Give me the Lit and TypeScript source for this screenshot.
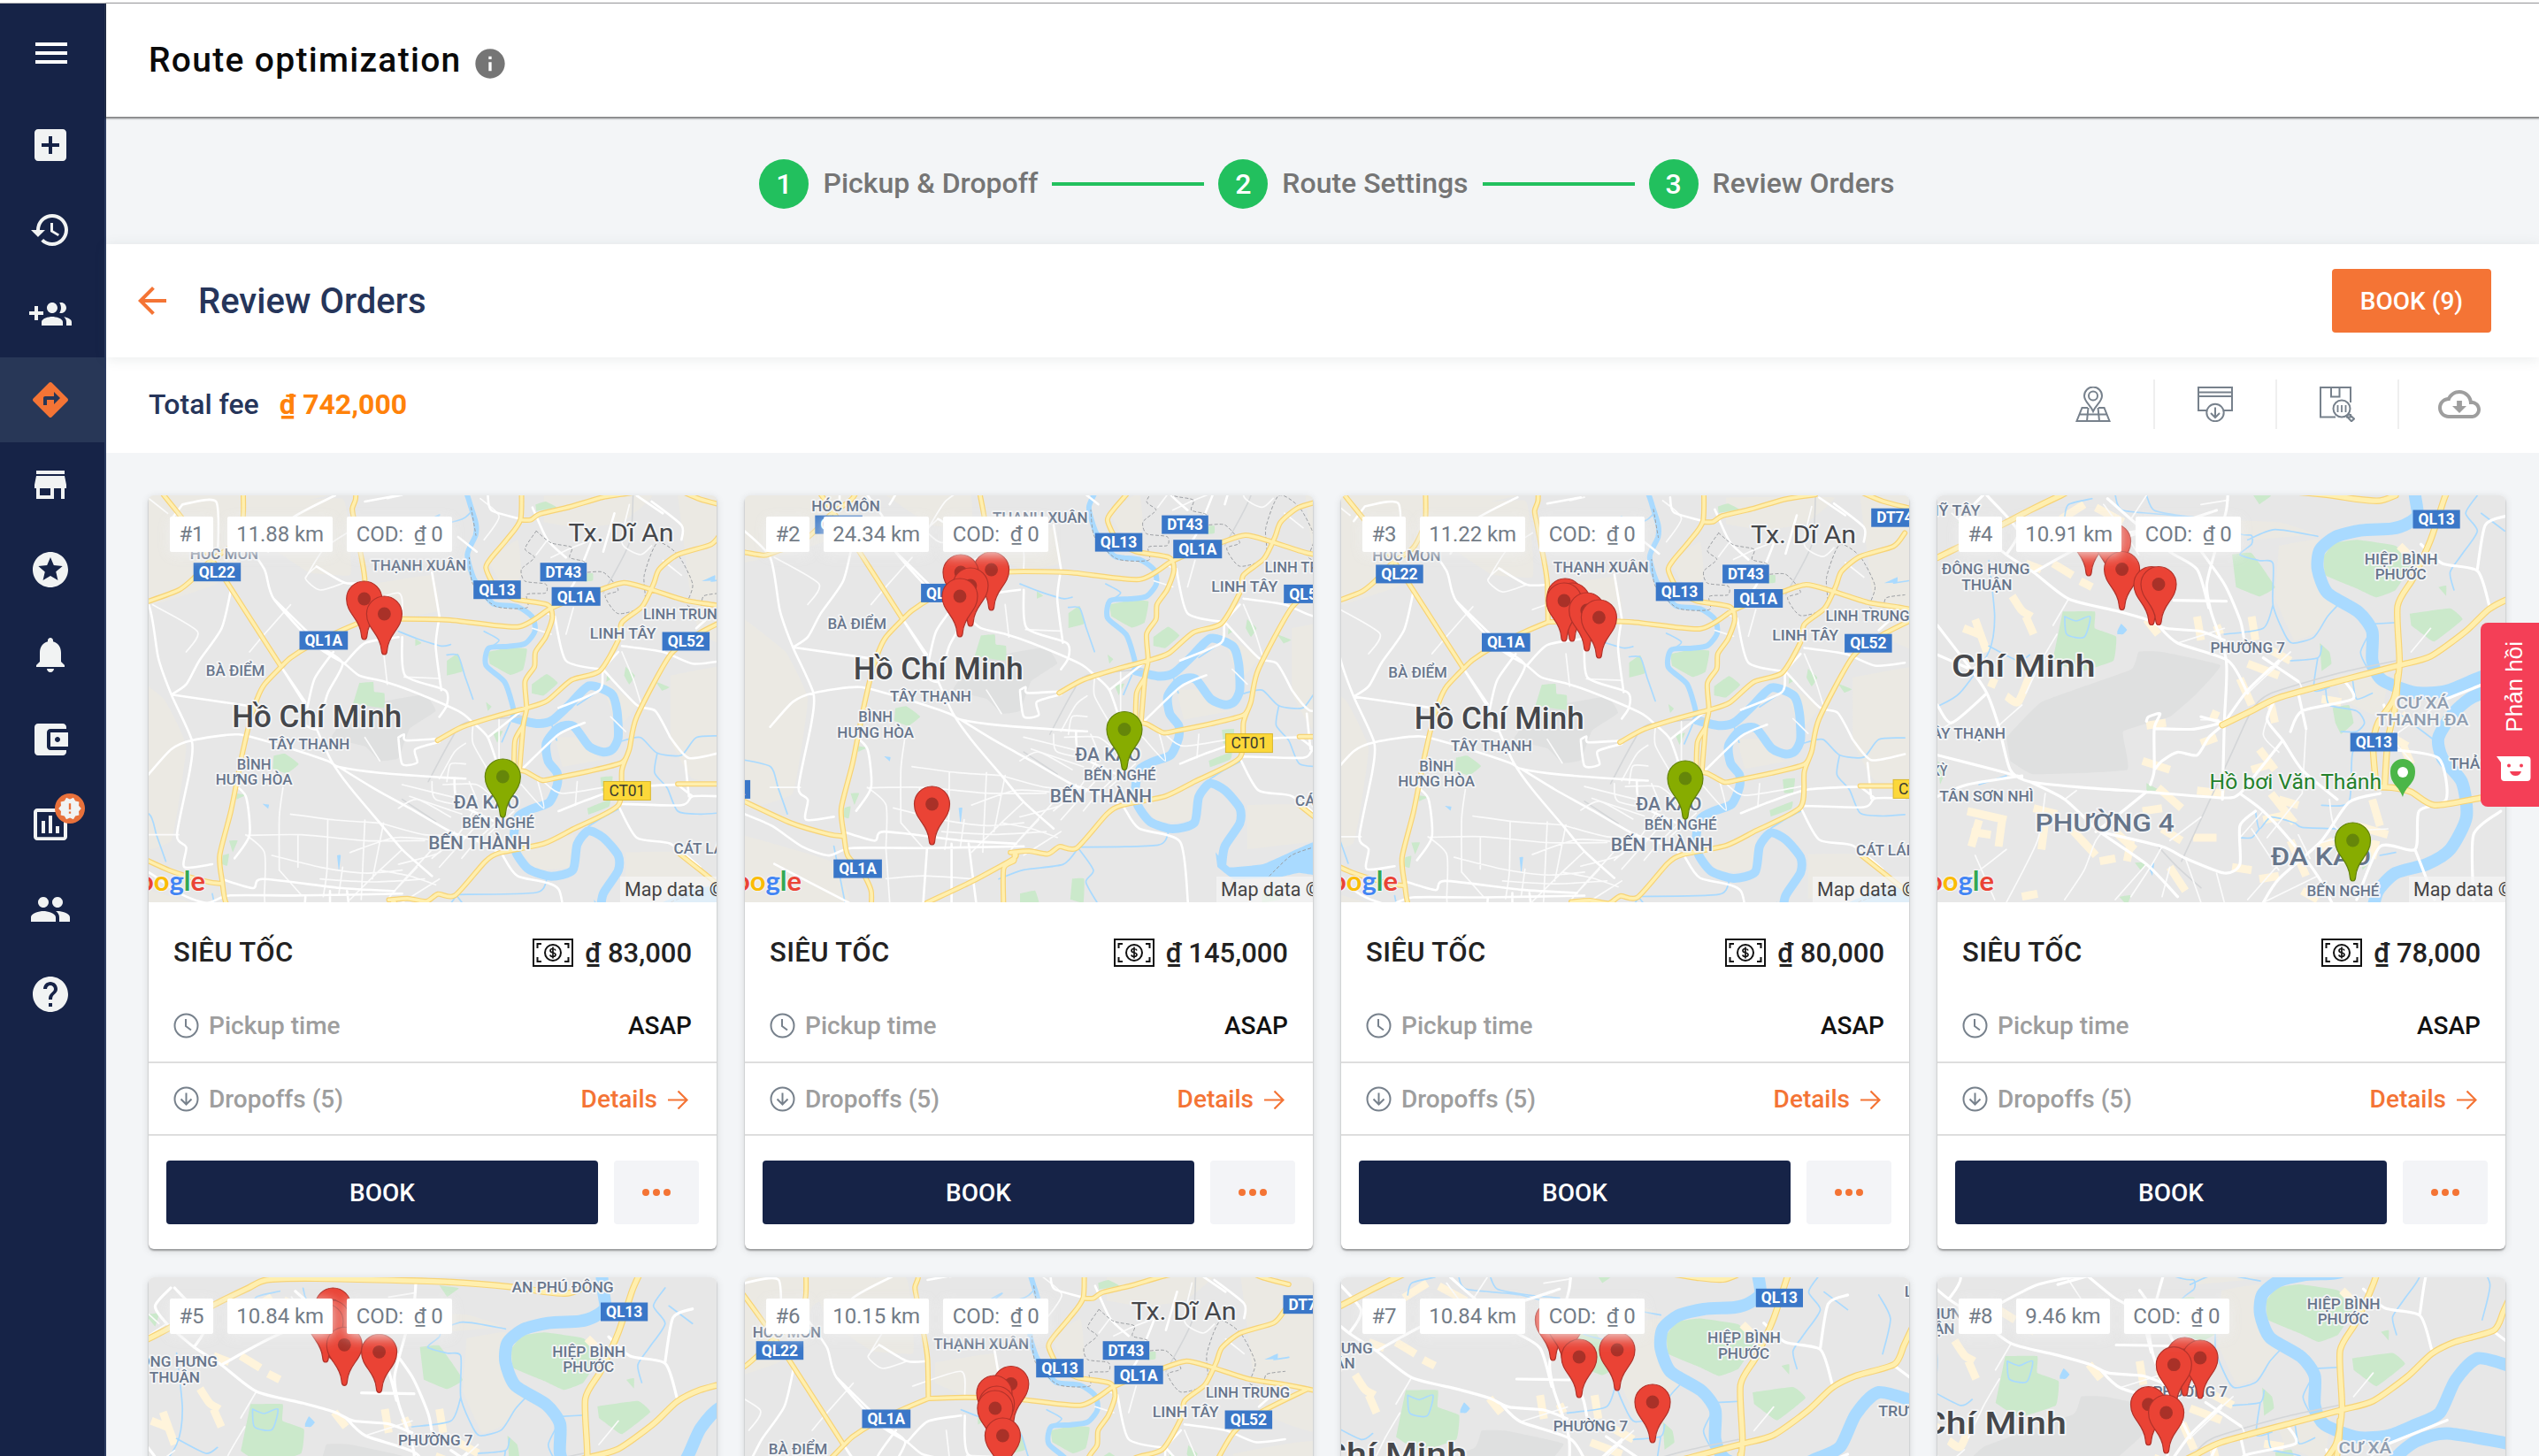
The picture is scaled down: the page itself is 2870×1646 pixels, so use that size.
import { LitElement, html, svg, css } from "lit";
import { customElement, property } from "lit/decorators.js";

/* ---------- map geometry ---------- */

type Frame = { x: number; y: number; kx: number; ky: number };
const CITY: Frame = { x: 19, y: 29, kx: 0.4209, ky: 1 / 3 };
const DISTRICT: Frame = { x: 23, y: 29, kx: 0.44005, ky: 1 / 3 };

const project = (f: Frame, s: string): [number, number][] =>
  s.trim().split(/\s+/).map((p) => {
    const [x, y] = p.split(",").map(Number);
    return [(x - f.x) * f.kx, (y - f.y) * f.ky] as [number, number];
  });

const n = (v: number) => v.toFixed(1);

/* Catmull-Rom spline through the points; t = 0 gives straight segments. */
function line(f: Frame, s: string, t = 0.12): string {
  const p = project(f, s);
  let d = `M${n(p[0][0])} ${n(p[0][1])}`;
  for (let i = 0; i < p.length - 1; i++) {
    const a = p[Math.max(0, i - 1)], b = p[i], c = p[i + 1], e = p[Math.min(p.length - 1, i + 2)];
    d += `C${n(b[0] + (c[0] - a[0]) * t)} ${n(b[1] + (c[1] - a[1]) * t)} ${n(c[0] - (e[0] - b[0]) * t)} ${n(c[1] - (e[1] - b[1]) * t)} ${n(c[0])} ${n(c[1])}`;
  }
  return d;
}
const lines = (f: Frame, list: string[], t?: number) => list.map((s) => line(f, s, t)).join("");
const areas = (f: Frame, list: string[], t = 0.05) => list.map((s) => line(f, s, t) + "Z").join("");

type Label = { t: string; x: number; y: number; w: number; k?: string };
type Base = {
  frame: Frame;
  land: string; gray: string; park: string; cream: string;
  river: string; wide: string; lake: string; stream: string;
  minor: string; road: string; rail: string; dash: string; yellow: string;
  labels: Label[];
};

const cityBase: Base = {
  frame: CITY,
  land: areas(CITY, [
    "-60,20 520,20 390,60 290,140 270,230 200,330 60,390 -60,420",
    "290,60 540,40 560,200 560,300 450,290 330,190",
    "620,330 780,300 800,420 700,440 620,400",
    "1080,30 1370,30 1290,120 1180,140 1080,120",
    "930,250 1010,180 1020,300 980,360",
    "1440,30 1650,30 1650,560 1500,500 1470,330",
    "1420,640 1650,600 1650,1000 1480,990 1420,860",
    "-60,600 60,720 120,880 80,1200 -60,1260", "-60,1340 180,1430 230,1571 -60,1571",
    "1010,1230 1160,1180 1150,1290 1060,1300", "1230,650 1330,740 1280,820",
    "1300,1240 1440,1240 1540,1350 1300,1390", "1110,850 1180,850 1230,920 1260,920 1130,950"
  ]),
  gray: areas(CITY, ["640,730 760,705 790,760 720,820 690,920 640,930 600,880 510,850 560,760"]),
  park: areas(CITY, [
    "930,560 990,545 1035,550 1025,620 990,638 935,600", "585,665 622,662 625,695 652,700 650,750 568,735",
    "820,590 850,565 862,625 820,640", "1048,670 1088,635 1118,665 1080,708 1048,700",
    "355,912 385,905 422,940 390,972 352,955", "1058,60 1085,50 1115,70 1060,82",
    "1185,295 1212,293 1212,318 1190,322", "1232,985 1265,982 1260,1030 1236,1032",
    "1197,1090 1258,1060 1255,1085 1200,1112", "1300,610 1325,640 1310,670 1296,640",
    "1380,660 1418,680 1398,692", "944,835 970,828 955,868", "925,730 940,745 930,760",
    "235,1200 258,1200 245,1240", "218,1250 235,1245 230,1285 216,1280", "255,1040 280,1045 255,1060",
    "735,515 752,530 735,540", "1250,640 1262,650 1248,662", "830,1490 862,1490 860,1571 825,1560",
    "690,1540 730,1530 740,1571 690,1571", "1340,1540 1380,1530 1390,1560 1340,1571"
  ]),
  cream: "",
  river: lines(CITY, [
    "860,-20 875,30 885,70 898,125 897,165 875,230 892,310 920,362 947,398 1010,407 1050,442 1056,490 1030,532 985,541 932,547 925,605 975,662 996,740 1003,790"
  ]),
  wide: lines(CITY, [
    "1000,785 1060,803 1102,793 1150,738 1202,675 1262,702 1277,760 1280,850 1265,890 1240,900 1202,880 1160,812 1120,817 1087,870 1092,930 1116,970 1116,1012 1095,1070 1050,1092 1012,1118 1000,1180 1006,1240 1040,1297 1100,1321 1158,1300 1170,1212 1200,1167 1240,1190 1280,1250 1280,1302 1240,1380 1232,1440"
  ]),
  lake: areas(CITY, [
    "1215,1400 1253,1451 1344,1440 1415,1400 1480,1365 1600,1340 1650,1340 1650,1500 1540,1490 1440,1470 1385,1485 1263,1490 1220,1450",
    "1505,320 1540,300 1540,318", "325,1075 342,1078 340,1092", "525,1250 535,1250 530,1308", "1330,1470 1355,1490 1335,1480"
  ]),
  stream: lines(CITY, [
    "690,490 740,515 805,540 830,535", "820,570 850,572 868,640 890,720", "1290,862 1340,850 1385,903 1450,910 1490,850 1560,845",
    "1385,903 1378,970 1412,1022 1440,1100 1500,1110 1560,1105", "1285,1090 1240,1120 1200,1152", "846,1383 1060,1376 1090,1326 1110,1320",
    "633,1491 700,1460 806,1441 846,1386", "846,1386 887,1461 867,1501 897,1571", "720,150 800,95 760,140 860,110 885,85", "1100,800 1115,860",
    "1170,740 1230,690", "930,550 960,520 920,490", "-60,1085 20,1110 40,1180 65,1270", "1530,320 1570,312", "968,865 990,800", "1040,1090 1000,1130", "190,1380 220,1571"
  ]),
  minor: lines(CITY, [
    "560,150 490,210 440,310", "470,270 440,310 480,350 545,325", "400,400 330,500 290,560", "650,560 660,670", "705,645 800,650",
    "280,1182 430,1180 600,1200 760,1200", "380,1020 370,1120 370,1300", "400,1110 520,1130 640,1140", "350,1250 480,1290 600,1310 700,1300",
    "500,1130 498,1300 488,1390", "600,1130 590,1400", "650,1140 620,1330", "700,1230 640,1300 560,1400", "780,1230 700,1340 660,1400",
    "640,1140 760,1180 860,1180", "560,1240 680,1190 800,1200", "840,1170 800,1240 690,1280", "860,1060 700,1010", "860,1110 720,1050",
    "900,1080 850,1180 780,1260", "780,1000 790,1060 900,1090", "810,1010 900,1010 950,1060", "870,870 840,900 800,990", "890,810 890,870 930,960",
    "960,790 960,930", "1090,430 1110,440", "820,1000 830,940 870,940", "950,1140 900,1200 860,1260", "920,1120 870,1190 800,1290", "1000,1100 930,1180",
    "280,1180 330,1240 330,1380", "19,1180 100,1180", "370,1300 430,1386", "420,1180 420,1290", "540,1290 530,1380", "480,1330 620,1340 760,1330",
    "740,1290 680,1370", "800,1330 700,1410", "640,1300 720,1320 790,1350", "330,1490 430,1480 560,1490", "330,1390 340,1571", "1020,1010 1080,1090 1060,980",
    "1080,1000 1130,1040 1280,1010", "1170,1000 1165,1080", "1300,830 1260,780", "1450,300 1400,250", "1090,180 1060,230", "1210,180 1150,210 1100,240",
    "1050,480 1100,500", "1140,500 1160,410", "1400,560 1430,520", "1340,730 1320,650 1290,560", "120,560 150,490 30,400", "660,40 700,29", "560,410 690,360 700,440",
    "20,40 70,90", "1310,60 1290,190 1340,230 1370,200", "910,40 960,100 920,180", "640,930 600,850", "690,1090 740,1060 830,1120", "880,1000 900,1060"
  ]),
  road: lines(CITY, [
    "-60,300 19,400 45,580 80,705 135,860 130,960 95,1180 120,1222 115,1290 190,1280", "80,705 120,670 155,590 215,480 240,350",
    "80,705 300,745", "110,60 200,50 205,220", "110,60 80,110", "275,180 330,280 355,380 470,540 545,600 585,640 650,660 720,690 850,760 890,800 930,850 960,960",
    "520,29 400,110 340,220", "470,270 545,325 600,325", "235,330 310,480 440,740", "355,380 460,510", "375,610 440,730", "600,50 690,29",
    "515,560 465,650 445,750", "490,550 540,600 500,700 470,820 430,800", "545,600 600,530 690,510", "19,975 80,890 135,860 260,840 380,880 500,930 530,950 640,970 800,985 870,990",
    "470,820 510,930 560,1020 640,1140 700,1230 780,1320", "530,950 620,1020 720,1090 830,1170 900,1200 960,1240", "840,990 850,1070 940,1130 1000,1160",
    "690,855 700,940 740,935 735,890 800,865", "690,850 705,840 710,860 790,855", "700,510 708,640 815,690 820,740 800,780", "800,440 790,540 805,690", "780,290 800,440",
    "1020,110 940,80 930,29", "850,170 900,220", "1110,440 1140,590 1240,620", "1240,620 1330,740 1380,760 1420,850", "1290,540 1400,560 1480,600 1560,590",
    "1120,750 1230,690 1240,620 1280,560", "1140,240 1090,180 1050,70", "1210,180 1160,330 1110,400", "1280,1080 1330,1190 1420,1210 1500,1290",
    "1120,1100 1200,1060 1300,1020 1440,1010", "1280,1075 1450,1080 1480,1050 1560,1050", "1440,1010 1480,1050", "970,1250 1010,1320 1120,1365 1141,1571",
    "-49,1271 24,1311 105,1381 176,1411 238,1386 430,1386 700,1380", "217,1331 300,1361 325,1330 530,1360 680,1371", "440,1391 430,1571", "506,1371 506,1571", "552,1371 572,1571",
    "240,1000 280,1050 290,1180 250,1260", "30,1440 230,1571", "1420,850 1470,920 1560,900", "1460,930 1470,1050", "930,850 1030,750", "1020,960 1120,840 1190,800", "1370,50 1450,130 1450,180", "1270,90 1240,220", "1330,30 1400,90", "1560,400 1490,480"
  ]),
  rail: lines(CITY, ["1320,30 1310,190 1240,360", "1020,780 870,800 830,860 770,1000", "700,1060 790,1135"]),
  dash: lines(CITY, [
    "1060,150 1030,210 1055,240 1020,280 1030,320 1085,330 1085,360 1035,365 1035,410 950,405 890,330 880,240", "1060,150 1100,190 1155,205 1150,240 1190,255 1180,290 1240,290 1280,350 1245,370 1280,430 1350,400 1350,300 1385,190 1440,230 1480,330 1465,400 1500,410 1510,370 1560,360",
    "885,70 898,165", "1360,1480 1420,1410 1500,1375"
  ]),
  yellow: lines(CITY, [
    "40,-10 60,29 108,105 185,240 230,325 375,610", "272,-20 272,110 240,200 185,250 140,310 100,350 19,388 0,393 -49,383 -80,378",
    "575,-20 575,40 566,75 572,120 592,250 600,320 602,452", "602,452 540,485 450,540 400,580 375,610 330,670 310,720 290,800 275,880 262,960 240,1100 210,1250 217,1341 227,1411 268,1471 290,1531 290,1590",
    "602,452 700,448 830,452 1010,475 1095,415 1150,385 1230,350 1295,325 1360,345 1460,385 1545,402 1660,430",
    "1020,-20 1018,110 980,180 940,240 925,275 950,340 1000,380 1090,400 1103,445 1085,510 1058,560 1055,610 1030,660 1034,750 1025,810 1015,960",
    "1025,810 1003,860 1000,960", "1000,960 1030,965 1075,995 1110,988 1200,965 1290,935 1310,890", "1018,112 1045,112 1070,92 1150,68 1240,35 1320,20",
    "795,860 860,815 960,775 1035,750 1090,725 1155,655 1230,625 1280,520 1290,460 1345,405 1375,330 1390,280 1440,230 1530,195 1560,150", "1440,10 1500,42 1570,65",
    "1620,420 1500,495 1420,570 1330,780 1310,890 1290,960 1280,1080 1160,1160 1080,1210 963,1241 923,1271 842,1386 796,1381 765,1406 715,1396 664,1401",
    "674,1401 674,1420 560,1500 440,1571", "674,1410 674,1430 646,1456 646,1590", "-60,1222 75,1301 176,1339 217,1346", "1440,1008 1660,1008", "1440,1240 1500,1300 1600,1400"
  ]),
  labels: [
    { t: "HÓC MÔN", x: 222, y: 228, w: 184, k: "area" },
    { t: "THẠNH XUÂN", x: 744, y: 266, w: 256, k: "area" },
    { t: "BÀ ĐIỂM", x: 252, y: 625, w: 158, k: "area" },
    { t: "LINH TRUNG", x: 1460, y: 433, w: 226, k: "area" },
    { t: "LINH TÂY", x: 1293, y: 499, w: 178, k: "area" },
    { t: "TÂY THẠNH", x: 450, y: 873, w: 218, k: "area" },
    { t: "BÌNH", x: 302, y: 942, w: 92, k: "area" },
    { t: "HƯNG HÒA", x: 302, y: 994, w: 206, k: "area" },
    { t: "ĐA KAO", x: 926, y: 1071, w: 176, k: "area2" },
    { t: "BẾN NGHÉ", x: 958, y: 1140, w: 194, k: "area" },
    { t: "BẾN THÀNH", x: 907, y: 1210, w: 274, k: "area2" },
    { t: "CÁT LÁI", x: 1502, y: 1226, w: 146, k: "area" },
    { t: "Hồ Chí Minh", x: 471, y: 780, w: 456, k: "city" },
    { t: "Tx. Dĩ An", x: 1288, y: 155, w: 283, k: "town" },
    { t: "QL22", x: 203, y: 289, w: 127, k: "shield" },
    { t: "DT43", x: 1133, y: 289, w: 125, k: "shield" },
    { t: "QL13", x: 955, y: 349, w: 127, k: "shield" },
    { t: "QL1A", x: 1167, y: 372, w: 131, k: "shield" },
    { t: "QL1A", x: 489, y: 521, w: 130, k: "shield" },
    { t: "QL52", x: 1462, y: 524, w: 127, k: "shield" }
  ]
};

const districtBase: Base = {
  frame: DISTRICT,
  land: areas(DISTRICT, ["900,200 1000,180 1010,290 1050,400 1000,490 940,520 890,380", "700,110 900,120 990,160 830,180", "1040,640 1180,620 1160,780 1060,720"]),
  gray: areas(DISTRICT, ["200,850 290,730 520,620 540,560 600,560 750,605 690,700 620,780 500,830 510,960 270,975 210,930"]),
  park: areas(DISTRICT, [
    "1040,190 1100,180 1200,200 1240,262 1200,350 1150,375 1100,345 1020,300 1015,235", "345,423 427,423 427,480 482,508 475,590 380,630 320,582",
    "1236,430 1340,412 1372,450 1300,525 1270,500 1240,470", "780,230 830,225 890,340 850,372 790,340", "1038,750 1080,740 1092,800 1060,838 1045,800",
    "1005,530 1030,560 1035,600 1010,625", "530,1275 560,1275 545,1300", "23,930 45,960 30,1010", "490,1390 520,1385 510,1420", "560,1005 595,1030 560,1030",
    "1110,1250 1135,1270 1115,1300", "1310,340 1330,335 1330,370", "830,20 880,30 850,60", "75,120 110,115 100,160"
  ]),
  cream: lines(DISTRICT, [
    "215,370 240,420 265,440", "250,440 270,500", "90,480 130,500", "260,640 230,730 200,710", "160,680 170,650", "320,260 370,300", "390,320 420,340",
    "560,450 590,500", "690,440 700,520", "740,470 750,500", "830,440 840,520", "860,540 930,590", "820,600 900,640", "800,650 830,740", "740,760 730,790", "550,930 620,960",
    "590,1020 650,1090", "550,1100 600,1090", "690,1030 760,1040", "850,890 890,960", "830,960 880,940", "880,1040 940,1140", "900,1060 950,1080", "860,1130 930,1110",
    "100,1100 200,1130", "110,1170 160,1180", "130,1130 110,1220", "190,1120 180,1220", "270,1090 330,1110", "300,1130 290,1230", "360,1150 430,1250", "440,1270 480,1260", "480,1170 530,1230",
    "520,1200 510,1270", "600,1160 650,1200", "680,1190 740,1190", "620,1290 660,1370", "780,1290 830,1300", "850,1330 900,1320", "930,1200 970,1320", "1000,1230 1040,1200", "1100,1150 1180,1180",
    "1150,1200 1140,1260", "960,1370 1000,1400", "240,1390 280,1380", "1180,840 1230,880", "1210,800 1230,770", "1010,720 1060,730", "560,810 610,800", "880,740 890,800",
    "400,60 340,110", "430,70 500,120", "250,260 290,280", "1140,1060 1160,1150", "1220,880 1240,940", "120,450 150,560", "700,870 740,850", "1210,200 1240,240"
  ]),
  river: "",
  wide: lines(DISTRICT, [
    "1245,-60 1250,29 1256,95 1230,125 1190,142 1110,148 1045,170 1005,215 1000,280 1025,360 1105,425 1140,490 1140,590 1165,655 1250,698 1330,692 1400,655 1461,615 1501,505 1560,430 1660,465",
    "1640,720 1480,685 1400,712 1350,765 1310,850 1320,920 1370,1000 1382,1120 1340,1230 1280,1280 1200,1310 1155,1370 1140,1440"
  ]),
  lake: areas(DISTRICT, ["485,490 495,465 510,485 500,500 485,500", "565,1290 580,1275 575,1320"]),
  stream: lines(DISTRICT, [
    "350,100 360,60 420,40", "560,29 580,80 660,100 740,110", "480,30 500,80 640,100 800,160 830,165 830,195 800,230 850,250 885,260 885,400 915,500 935,530 990,510 1025,440 1060,390",
    "820,180 890,145 1000,168", "155,250 170,440 155,560 80,700 23,745", "155,540 230,590 260,570", "350,440 355,500 400,510 415,440 380,455 350,440", "930,590 1000,580 1010,540",
    "1140,480 1110,560 1130,620", "1020,680 1030,740 1100,760 1120,800 1100,830 1060,830", "1010,1080 1080,1070 1090,900 1140,850", "1180,740 1240,800 1300,860", "840,1100 850,1160 880,1120 940,1140 960,1155 1060,1160",
    "850,1160 830,1190 800,1190", "1160,1250 1200,1240", "1410,29 1380,90 1410,150 1370,230 1340,290 1350,350", "1140,465 1210,460", "1480,150 1420,90", "760,500 860,480 885,400",
    "1090,660 1100,720 1140,700", "1000,580 990,690 1030,680", "130,1010 200,980", "1560,100 1590,180 1570,300"
  ]),
  minor: lines(DISTRICT, [
    "60,90 110,150", "130,150 60,210", "450,60 500,150 540,230", "520,110 560,29", "700,60 770,45", "320,470 360,380", "250,700 290,590 330,500", "150,580 110,620", "240,740 180,810",
    "640,530 760,480", "860,580 950,660 960,700", "900,600 820,700", "930,560 880,620", "900,900 860,840 890,720", "970,820 960,1040", "700,790 745,790", "60,800 23,830", "120,860 180,810",
    "480,1120 430,1200 400,1300 350,1400", "350,1060 380,1030", "620,1290 600,1390", "560,1280 480,1400", "600,1220 570,1290 520,1390", "860,1100 800,1190", "1000,1320 860,1410", "900,1280 820,1400",
    "950,1180 980,1260", "1030,1060 1050,1160 1180,1160", "1200,840 1330,720", "1200,870 1240,930", "300,1040 280,1200 200,1410", "120,1250 170,1400", "23,1370 120,1310 200,1230", "1290,480 1240,560", "660,1260 700,1410",
    "830,1160 900,1300", "740,1310 760,1410", "1080,1180 1000,1210", "700,1120 620,1200", "960,1040 870,1190"
  ]),
  road: lines(DISTRICT, [
    "140,29 100,90 130,150 200,230 270,290 360,380 480,420 560,450 610,480 700,490 760,520", "150,29 230,150 200,230", "460,40 520,110 620,220 690,280 720,410", "590,470 640,530 770,590 820,700",
    "630,385 765,388", "770,0 765,80 740,200 715,330 725,420 765,590 760,800 755,1060", "690,200 760,330 800,450 810,510", "270,290 430,180 620,130 740,80", "480,180 640,120",
    "23,470 110,620 150,700 180,810 210,960 260,1000 400,1020 560,1035 760,1055 800,1040 850,960 910,860", "580,820 680,822 755,800", "700,780 755,800", "560,795 565,780 595,770 580,820 580,960 570,1010",
    "580,960 600,930 640,900 690,910 720,850 755,810", "23,910 170,960 240,985", "23,1050 100,1010 240,980", "23,740 60,800 150,700", "260,1000 350,1060 440,1170 560,1280 640,1390",
    "560,1035 480,1120 430,1170", "440,1170 600,1220 660,1260 760,1310 800,1280 800,1150 840,1100", "800,1040 860,1100 930,1200 1000,1320 1040,1420", "890,720 870,790 910,860 960,960 1050,1060", "1070,660 1090,720 960,760 930,830",
    "950,700 970,820", "755,810 820,690 900,590", "860,580 950,660", "1160,1040 1080,1070 1010,1200 900,1330 860,1410", "1180,890 1310,920 1330,1060 1260,1100 1250,1230 1160,1220 1100,1400",
    "1265,195 1320,260 1410,285 1440,400", "1480,100 1430,130 1410,280", "1250,1230 1300,1400", "1170,740 1200,870", "1330,720 1480,640", "1600,340 1650,390", "23,570 110,620", "1470,1100 1400,1180 1400,1400"
  ]),
  rail: lines(DISTRICT, ["1200,590 1060,630 880,700 830,760 780,900 650,1270", "590,1220 640,1290 700,1360"]),
  dash: "",
  yellow: lines(DISTRICT, [
    "-20,265 23,240 100,190 260,80 340,29 386,2 512,-3 842,8 1017,26 1100,42 1160,47 1200,29", "1345,-20 1325,40 1290,180 1245,310 1205,405 1210,600 1195,720 1155,800 1142,880 1150,1015",
    "1205,640 1200,740 1180,860 1172,1015", "1150,1018 1190,1020 1240,1035 1300,1080 1420,1055 1520,1035", "755,808 830,760 900,715 1080,650 1210,605 1290,575 1380,490 1440,415 1500,375 1600,335 1625,270 1650,200"
  ]),
  labels: [
    { t: "ĐÔNG HƯNG", x: 147, y: 280, w: 226, k: "area" },
    { t: "THUẬN", x: 150, y: 332, w: 130, k: "area" },
    { t: "HIỆP BÌNH", x: 1214, y: 246, w: 188, k: "area" },
    { t: "PHƯỚC", x: 1213, y: 298, w: 132, k: "area" },
    { t: "PHƯỜNG 7", x: 820, y: 545, w: 192, k: "area" },
    { t: "CƯ XÁ", x: 1269, y: 735, w: 136, k: "pale" },
    { t: "THANH ĐA", x: 1269, y: 790, w: 236, k: "pale" },
    { t: "TÂY THẠNH", x: 92, y: 838, w: 212, k: "area" },
    { t: "TÂN SƠN NHÌ", x: 149, y: 1051, w: 242, k: "area" },
    { t: "PHƯỜNG 4", x: 453, y: 1143, w: 358, k: "ward" },
    { t: "ĐA KAO", x: 1008, y: 1256, w: 258, k: "ward" },
    { t: "BẾN NGHÉ", x: 1065, y: 1372, w: 186, k: "area" },
    { t: "THẢO ĐIỀN", x: 1440, y: 938, w: 204, k: "area" },
    { t: "Hồ bơi Văn Thánh", x: 943, y: 1002, w: 442, k: "poi" },
    { t: "QL13", x: 1305, y: 110, w: 121, k: "shield" },
    { t: "QL13", x: 1144, y: 866, w: 121, k: "shield" }
  ]
};

/* font size per label kind */
const KIND: Record<string, number> = { area: 16.8, area2: 19.5, city: 34.5, town: 28.5, pale: 18, ward: 27, poi: 24 };

const drawLabel = (f: Frame, l: Label) => {
  const x = (l.x - f.x) * f.kx, y = (l.y - f.y) * f.ky, w = l.w * f.kx, k = l.k ?? "area";
  if (k === "shield" || k === "toll") {
    return svg`<rect class=${k} x=${n(x - w / 2)} y=${n(y - 10.5)} width=${n(w)} height="21"></rect>
      <text class="${k}-t" text-anchor="middle" x=${n(x)} y=${n(y + 6.2)} font-size="18" textLength=${n(w - 12)} lengthAdjust="spacingAndGlyphs">${l.t}</text>`;
  }
  const s = KIND[k];
  return svg`<text class="lb ${k}" text-anchor="middle" x=${n(x)} y=${n(y + s * 0.335)} font-size=${s} textLength=${n(w)} lengthAdjust="spacingAndGlyphs">${l.t}</text>`;
};

const pinPath = "M0 0C-2.6 0 -3 -2 -3.4 -6C-5 -24 -20 -29 -20 -46A20 20 0 0 1 20 -46C20 -29 5 -24 3.4 -6C3 -2 2.6 0 0 0Z";
const drawPin = (p: number[], kind: string) => svg`<g transform="translate(${p[0]} ${p[1]})" class="pin ${kind}">
  <path d=${pinPath}></path><circle cx="0" cy="-46" r="7.4"></circle></g>`;

interface Order {
  id: number; km: string; fee: string; base: Base; dx: number; dy: number;
  red: number[][]; green?: number[]; extra?: Label[]; poi?: boolean;
}

const ORDERS: Order[] = [
  { id: 1, km: "11.88", fee: "83,000", base: cityBase, dx: 0, dy: 0, red: [[243.7, 163], [266.4, 180]], green: [400.3, 364],
    extra: [{ t: "CT01", x: 1304, y: 1031, w: 126, k: "toll" }] },
  { id: 2, km: "24.34", fee: "145,000", base: cityBase, dx: 28.6, dy: -53.6, red: [[278.6, 130], [244, 133], [255, 148], [243, 160], [211.5, 395]], green: [429, 310.5],
    extra: [{ t: "QL1A", x: -98, y: 1187, w: 127, k: "shield" }, { t: "QL1A", x: 254, y: 1456, w: 130, k: "shield" }, { t: "CT01", x: 1305, y: 1030, w: 126, k: "toll" }] },
  { id: 3, km: "11.22", fee: "80,000", base: cityBase, dx: -11.5, dy: 2.2, red: [[253, 160], [261, 165], [252, 165], [277.7, 176], [291.4, 184]], green: [389, 366],
    extra: [{ t: "DT743", x: 1545, y: 98, w: 150, k: "shield" }, { t: "CT01", x: 1592, y: 1018, w: 126, k: "toll" }] },
  { id: 4, km: "10.91", fee: "78,000", base: districtBase, dx: 0, dy: 0, poi: true, red: [[171, 91], [198.5, 98], [208.6, 129.5], [242, 146.5], [250, 146.5]], green: [469.5, 436],
    extra: [{ t: "Chí Minh", x: 244, y: 608, w: 370, k: "city" }, { t: "MỸ TÂY", x: 62, y: 81, w: 142, k: "area" }, { t: "KỲ", x: 29, y: 963, w: 40, k: "area" }] },
  { id: 5, km: "10.84", fee: "78,000", base: districtBase, dx: -26.5, dy: 12, red: [[208.5, 78], [207, 92], [200, 96], [221.3, 122.3], [260.6, 130.3]],
    extra: [{ t: "AN PHÚ ĐÔNG", x: 1147, y: 27, w: 262, k: "area" }] },
  { id: 6, km: "10.15", fee: "77,000", base: cityBase, dx: -38, dy: -4, red: [[300.8, 166.5], [282, 177], [284.6, 189], [282.9, 194], [291.4, 225]],
    extra: [{ t: "DT743", x: 1630, y: 133, w: 150, k: "shield" }] },
  { id: 7, km: "10.84", fee: "78,000", base: districtBase, dx: -68.7, dy: -3.7, red: [[239.4, 94], [253, 98], [312, 128], [269, 136], [352, 187]],
    extra: [{ t: "Chí Minh", x: 317, y: 641, w: 370, k: "city" }, { t: "TRƯỜNG THỌ", x: 1686, y: 494, w: 254, k: "area" }, { t: "LINH TÂY", x: 1710, y: 90, w: 168, k: "area" }] },
  { id: 8, km: "9.46", fee: "76,000", base: districtBase, dx: -65, dy: -42.2, red: [[279.6, 134], [297, 137], [267.3, 144.7], [238.5, 189.7], [258.6, 199]],
    extra: [{ t: "Chí Minh", x: 317, y: 651, w: 370, k: "city" }] }
];

/* ---------- icons ---------- */

const ICON: Record<string, string> = {
  menu: "M3 18h18v-2H3v2zm0-5h18v-2H3v2zm0-7v2h18V6H3z",
  add: "M19 3H5c-1.11 0-2 .9-2 2v14c0 1.1.89 2 2 2h14c1.1 0 2-.9 2-2V5c0-1.1-.9-2-2-2zm-2 10h-4v4h-2v-4H7v-2h4V7h2v4h4v2z",
  history: "M13 3c-4.97 0-9 4.03-9 9H1l3.89 3.89.07.14L9 12H6c0-3.87 3.13-7 7-7s7 3.13 7 7-3.13 7-7 7c-1.93 0-3.68-.79-4.94-2.06l-1.42 1.42C8.27 19.99 10.51 21 13 21c4.97 0 9-4.03 9-9s-4.03-9-9-9zm-1 5v5l4.28 2.54.72-1.21-3.5-2.08V8H12z",
  groupAdd: "M8 10H5V7H3v3H0v2h3v3h2v-3h3v-2zm10 1c1.66 0 2.99-1.34 2.99-3S19.66 5 18 5c-.32 0-.63.05-.91.14.57.81.9 1.79.9 2.86s-.34 2.04-.9 2.86c.28.09.59.14.91.14zm-5 0c1.66 0 2.99-1.34 2.99-3S14.66 5 13 5c-1.66 0-3 1.34-3 3s1.34 3 3 3zm6.62 2.16c.83.73 1.38 1.66 1.38 2.84v2h3v-2c0-1.54-2.37-2.49-4.38-2.84zM13 13c-2 0-6 1-6 3v2h12v-2c0-2-4-3-6-3z",
  directions: "M21.71 11.29l-9-9c-.39-.39-1.02-.39-1.41 0l-9 9c-.39.39-.39 1.02 0 1.41l9 9c.39.39 1.02.39 1.41 0l9-9c.39-.38.39-1.01 0-1.41zM14 14.5V12h-4v3H8v-4c0-.55.45-1 1-1h5V7.5l3.5 3.5-3.5 3.5z",
  store: "M20 4H4v2h16V4zm1 10v-2l-1-5H4l-1 5v2h1v6h10v-6h4v6h2v-6h1zm-9 4H6v-4h6v4z",
  stars: "M11.99 2C6.47 2 2 6.48 2 12s4.47 10 9.99 10C17.52 22 22 17.52 22 12S17.52 2 11.99 2zm4.24 16L12 15.45 7.77 18l1.12-4.81-3.73-3.23 4.92-.42L12 5l1.92 4.53 4.92.42-3.73 3.23L16.23 18z",
  bell: "M12 22c1.1 0 2-.9 2-2h-4c0 1.1.89 2 2 2zm6-6v-5c0-3.07-1.64-5.64-4.5-6.32V4c0-.83-.67-1.5-1.5-1.5s-1.5.67-1.5 1.5v.68C7.63 5.36 6 7.92 6 11v5l-2 2v1h16v-1l-2-2z",
  wallet: "M21 18v1c0 1.1-.9 2-2 2H5c-1.11 0-2-.9-2-2V5c0-1.1.89-2 2-2h14c1.1 0 2 .9 2 2v1h-9c-1.11 0-2 .9-2 2v8c0 1.1.89 2 2 2h9zm-9-2h10V8H12v8zm4-2.5c-.83 0-1.5-.67-1.5-1.5s.67-1.5 1.5-1.5 1.5.67 1.5 1.5-.67 1.5-1.5 1.5z",
  chart: "M9 17H7v-7h2v7zm4 0h-2V7h2v10zm4 0h-2v-4h2v4zm2.5 2.1h-15V5h15v14.1zm0-16.1h-15c-1.1 0-2 .9-2 2v14c0 1.1.9 2 2 2h15c1.1 0 2-.9 2-2V5c0-1.1-.9-2-2-2z",
  people: "M16 11c1.66 0 2.99-1.34 2.99-3S17.66 5 16 5c-1.66 0-3 1.34-3 3s1.34 3 3 3zm-8 0c1.66 0 2.99-1.34 2.99-3S9.66 5 8 5C6.34 5 5 6.34 5 8s1.34 3 3 3zm0 2c-2.33 0-7 1.17-7 3.5V19h14v-2.5c0-2.33-4.67-3.5-7-3.5zm8 0c-.29 0-.62.02-.97.05 1.16.84 1.97 1.97 1.97 3.45V19h6v-2.5c0-2.33-4.67-3.5-7-3.5z",
  help: "M12 2C6.48 2 2 6.48 2 12s4.48 10 10 10 10-4.48 10-10S17.52 2 12 2zm1 17h-2v-2h2v2zm2.07-7.75l-.9.92C13.45 12.9 13 13.5 13 15h-2v-.5c0-1.1.45-2.1 1.17-2.83l1.24-1.26c.37-.36.59-.86.59-1.41 0-1.1-.9-2-2-2s-2 .9-2 2H8c0-2.21 1.79-4 4-4s4 1.79 4 4c0 .88-.36 1.68-.93 2.25z",
  info: "M12 2C6.48 2 2 6.48 2 12s4.48 10 10 10 10-4.48 10-10S17.52 2 12 2zm1 15h-2v-6h2v6zm0-8h-2V7h2v2z",
  alert: "M23 12l-2.44-2.78.34-3.68-3.61-.82-1.89-3.18L12 3 8.6 1.54 6.71 4.72l-3.61.81.34 3.68L1 12l2.44 2.78-.34 3.69 3.61.82 1.89 3.18L12 21l3.4 1.46 1.89-3.18 3.61-.82-.34-3.68L23 12zm-10 5h-2v-2h2v2zm0-4h-2V7h2v6z",
  back: "M20 11H7.83l5.59-5.59L12 4l-8 8 8 8 1.41-1.41L7.83 13H20v-2z",
  cloud: "M19.35 10.04C18.67 6.59 15.64 4 12 4 9.11 4 6.6 5.64 5.35 8.04 2.34 8.36 0 10.91 0 14c0 3.31 2.69 6 6 6h13c2.76 0 5-2.24 5-5 0-2.64-2.05-4.78-4.65-4.96zM19 18H6c-2.21 0-4-1.79-4-4s1.79-4 4-4h.71C7.37 7.69 9.48 6 12 6c3.04 0 5.5 2.46 5.5 5.5v.5H19c1.66 0 3 1.34 3 3s-1.34 3-3 3zm-5.55-8h-2.9v3H8l4 4 4-4h-2.55z"
};
const icon = (name: string, size = 48) =>
  html`<svg class="ic" width=${size} height=${size} viewBox="0 0 24 24" fill="currentColor"><path d=${ICON[name]}></path></svg>`;

/* ---------- order card ---------- */

@customElement("order-card")
export class OrderCard extends LitElement {
  @property({ attribute: false }) order!: Order;

  static styles = css`
    :host { display: block; background: #fff; border-radius: 6px; overflow: hidden; height: 852px;
      box-shadow: 0 2px 2px rgba(0,0,0,.32), 0 2px 10px rgba(0,0,0,.12); }
    .ic { display: block; }
    .map { position: relative; height: 460px; overflow: hidden; background: #e7e7e7; }
    .canvas { display: block; width: 642px; height: 460px; font-family: Roboto, sans-serif; font-weight: 500; }
    .land { fill: #ebe9e3; }
    .gray { fill: #dfe0e0; }
    .park { fill: #cbe9cb; }
    .lake { fill: #a9daff; }
    .ln { fill: none; stroke-linejoin: round; stroke-linecap: round; }
    .cream { stroke: #fff4db; stroke-width: 9; stroke-linecap: butt; }
    .river { stroke: #a9daff; stroke-width: 6; }
    .wide { stroke: #a9daff; stroke-width: 10; }
    .widest { stroke: #a9daff; stroke-width: 14; }
    .stream { stroke: #a9daff; stroke-width: 1.7; }
    .minor { stroke: #fbfbfb; stroke-width: 1.7; }
    .road { stroke: #fff; stroke-width: 2.6; }
    .bold .road { stroke-width: 3.2; }
    .rail { stroke: #d4d6d8; stroke-width: 1.6; }
    .dash { stroke: #9a9da1; stroke-width: 1; stroke-dasharray: 3 3; }
    .y1 { stroke: #f7d375; stroke-width: 6; }
    .y2 { stroke: #ffefae; stroke-width: 3.6; }
    .bold .y1 { stroke-width: 7.5; }
    .bold .y2 { stroke-width: 5.2; }
    .lb { fill: #68768c; stroke: #f4f5f6; stroke-width: 3.5; paint-order: stroke; stroke-linejoin: round; }
    .city, .town { fill: #45474b; }
    .town { font-weight: 400; }
    .pale { fill: #8f9db0; }
    .ward { fill: #66758a; }
    .poi { fill: #24812b; font-weight: 400; }
    .shield { fill: #3a77c8; }
    .shield-t { fill: #fff; font-weight: 700; }
    .toll { fill: #fcd83a; stroke: #d9b72c; }
    .toll-t { fill: #3c3c30; font-weight: 400; }
    .pin path { stroke-width: 1.2; }
    .red path { fill: #ea4335; stroke: #b1322a; }
    .red circle { fill: #a93128; }
    .green path { fill: #87ac00; stroke: #61800a; }
    .green circle { fill: #65860a; }
    .g { font-family: Lato, sans-serif; font-weight: 700; stroke: #f2f2f2; stroke-width: 2.5; paint-order: stroke; }
    .credit { font-weight: 400; fill: #444; }
    .chips { position: absolute; left: 24px; top: 24px; display: flex; gap: 16px; }
    .chip { height: 40px; padding: 0 10.4px; background: #fff; border-radius: 2px; display: flex; align-items: center;
      font-size: 24px; letter-spacing: -.1px; color: #737c87; white-space: pre; box-shadow: 0 3px 16px rgba(238,238,238,.95); }
    .row { display: flex; align-items: center; justify-content: space-between; padding: 0 28px; }
    .top { height: 98px; padding-top: 14px; box-sizing: border-box; color: #222; font-size: 31px; font-weight: 500; letter-spacing: .4px; }
    .fee { display: flex; align-items: center; gap: 13px; padding-top: 2px; font-size: 31px; letter-spacing: 0; }
    .pick { height: 82px; border-bottom: 2px solid #dedede; font-size: 28px; }
    .drop { height: 80px; border-bottom: 2px solid #dedede; font-size: 28px; }
    .key { display: flex; align-items: center; gap: 11px; color: #9e9e9e; letter-spacing: .02px; font-weight: 500; }
    .key svg { stroke: #77818c; }
    .asap { color: #111; font-weight: 500; }
    .details { display: flex; align-items: center; gap: 12px; color: #f47435; font-weight: 500; padding-right: 4px; }
    .acts { display: flex; gap: 18px; padding: 28px 20px; }
    .book { flex: 1; height: 72px; background: #162347; color: #fff; border-radius: 4px; display: flex; align-items: center; justify-content: center; font-size: 28px; font-weight: 500; }
    .more { width: 96px; height: 72px; border-radius: 4px; background: #f3f4f7; display: flex; align-items: center; justify-content: center; gap: 4px; }
    .dot { width: 8px; height: 8px; border-radius: 50%; background: #f47435; }
  `;

  private map() {
    const o = this.order, b = o.base, detail = b === districtBase;
    return html`<svg class="canvas" viewBox="0 0 642 460">
      <g class=${detail ? "bold" : "thin"} transform="translate(${o.dx} ${o.dy})">
        <path class="land" d=${b.land}></path>
        <path class="gray" d=${b.gray}></path>
        <path class="park" d=${b.park}></path>
        <path class="ln cream" d=${b.cream}></path>
        <path class="lake" d=${b.lake}></path>
        <path class="ln stream" d=${b.stream}></path>
        <path class="ln river" d=${b.river}></path>
        <path class="ln ${detail ? "widest" : "wide"}" d=${b.wide}></path>
        <path class="ln rail" d=${b.rail}></path>
        <path class="ln minor" d=${b.minor}></path>
        <path class="ln road" d=${b.road}></path>
        <path class="ln dash" d=${b.dash}></path>
        <path class="ln y1" d=${b.yellow}></path>
        <path class="ln y2" d=${b.yellow}></path>
        ${[...b.labels, ...(o.extra ?? [])].map((l) => drawLabel(b.frame, l))}
        ${o.poi ? svg`<path fill="#4cb648" d="M526 341C521 327 512 327 512 312A14 14 0 0 1 540 312C540 327 530 327 526 341Z"></path><circle cx="526" cy="313" r="6" fill="#fff"></circle>` : ""}
      </g>
      ${o.red.map((p) => drawPin(p, "red"))}
      ${o.green ? drawPin(o.green, "green") : ""}
      <text class="g" x="-12" y="446.5" font-size="30" textLength="76" lengthAdjust="spacingAndGlyphs"><tspan fill="#ea4335">o</tspan><tspan fill="#fbbc05">o</tspan><tspan fill="#4285f4">g</tspan><tspan fill="#34a853">l</tspan><tspan fill="#ea4335">e</tspan></text>
      <rect x="533" y="431" width="110" height="29" fill="#f5f5f5" fill-opacity=".72"></rect>
      <text class="credit" x="538" y="453" font-size="21.5">Map data ©</text>
    </svg>`;
  }

  render() {
    const o = this.order;
    return html`
      <div class="map">
        ${this.map()}
        <div class="chips"><div class="chip">#${o.id}</div><div class="chip">${o.km} km</div><div class="chip">COD:  ₫ 0</div></div>
      </div>
      <div class="row top"><span>SIÊU TỐC</span>
        <span class="fee"><svg width="46" height="32" viewBox="0 0 46 32" fill="none" stroke="#111" stroke-width="2">
          <rect x="1" y="1" width="44" height="30"></rect>
          <path d="M10 6H5.5V11M36 6H40.500V11M10 26H5.500V21M36 26H40.500V21"></path>
          <circle cx="23" cy="16" r="9"></circle>
          <path d="M26 13.500C25.500 12 24.500 11.500 23 11.500C21 11.500 20 12.500 20 13.800C20 17 26 15 26 18.300C26 19.700 24.800 20.500 23 20.500C21.300 20.500 20.200 19.800 19.800 18.500M23 9.500V22.500" stroke-width="1.700"></path>
        </svg><span>₫ ${o.fee}</span></span>
      </div>
      <div class="row pick">
        <span class="key"><svg width="29" height="29" viewBox="0 0 29 29" fill="none" stroke-width="2"><circle cx="14.500" cy="14.500" r="13"></circle><path d="M14 7V15L20 19.500"></path></svg>Pickup time</span>
        <span class="asap">ASAP</span>
      </div>
      <div class="row drop">
        <span class="key"><svg width="29" height="29" viewBox="0 0 29 29" fill="none" stroke-width="2"><circle cx="14.500" cy="14.500" r="13"></circle><path d="M14.500 7.500V20.500M8.500 14.500L14.500 20.500L20.500 14.500"></path></svg>Dropoffs (5)</span>
        <span class="details">Details<svg width="23" height="24" viewBox="0 0 23 24" fill="none" stroke="#f47435" stroke-width="2.200"><path d="M0 13.500H21M11.500 3.500L21.500 13.500L11.500 23.500"></path></svg></span>
      </div>
      <div class="acts"><div class="book">BOOK</div><div class="more"><i class="dot"></i><i class="dot"></i><i class="dot"></i></div></div>
    `;
  }
}

/* ---------- page ---------- */

@customElement("app-root")
export class AppRoot extends LitElement {
  static styles = css`
    :host { display: block; position: relative; width: 2870px; height: 1646px; overflow: hidden; background: #fff; box-sizing: border-box;
      font-family: Roboto, sans-serif; color: #26355a; }
    .edge { height: 3px; border-bottom: 1px solid #b8b8bb; }
    .shell { display: flex; height: 1642px; }
    .ic { display: block; flex: none; }
    .side { width: 118px; border-right: 2px solid #2b3b5f; background: #162347; flex: none; color: #f1f3f3; }
    .item { height: 96px; padding-left: 33px; display: flex; align-items: center; box-sizing: border-box; }
    .burger { height: 112px; padding-left: 34px; box-sizing: border-box; display: flex; align-items: center; color: #fff; }
    .item.on { background: #283757; color: #f47435; }
    .chart { position: relative; }
    .bub { position: absolute; left: 29px; top: -11px; width: 34px; height: 34px; border-radius: 50%; background: #e8713b; display: flex; align-items: center; justify-content: center; }
    .main { flex: 1; min-width: 0; background: #f3f5f7; }
    .head { height: 128px; background: #fff; box-shadow: 0 1px 2px 1px rgba(0,0,0,.5); display: flex; align-items: center; padding: 8px 48px 0; gap: 12px; box-sizing: border-box; position: relative; }
    .title { font-size: 39px; font-weight: 500; color: #0a0a0a; letter-spacing: 1.3px; padding-bottom: 8px; }
    .info { color: #757575; }
    .steps { height: 144px; padding: 7px 0 0 10px; box-sizing: border-box; display: flex; align-items: center; justify-content: center; gap: 16px; }
    .num { width: 56px; height: 56px; border-radius: 50%; background: #22c05e; color: #fff; font-size: 32px; font-weight: 500; display: flex; align-items: center; justify-content: center; }
    .step { font-size: 32px; font-weight: 500; color: #757575; padding-bottom: 1px; }
    .bar { width: 172px; height: 4px; background: #22c05e; }
    .review { height: 128px; background: #fff; display: flex; align-items: center; padding: 0 54px 0 28px; position: relative; box-shadow: 0 2px 14px rgba(60,80,80,.11); box-sizing: border-box; }
    .review .ic { color: #f47435; }
    .rt { font-size: 40px; font-weight: 500; padding-left: 28px; flex: 1; }
    .cta { width: 180px; height: 72px; border-radius: 4px; background: #f47435; color: #fff; font-size: 28px; font-weight: 500; display: flex; align-items: center; justify-content: center; }
    .total { height: 108px; background: #fff; display: flex; align-items: center; padding: 0 22px 2px 48px; font-size: 32px; font-weight: 500; box-sizing: border-box; }
    .sum { color: #ff820a; font-weight: 700; padding-left: 23px; flex: 1; }
    .tool { width: 138px; height: 56px; box-sizing: border-box; border-left: 2px solid #efefef; display: flex; align-items: center; justify-content: center; }
    .tool:first-of-type { border-color: transparent; }
    .tool svg { stroke: #77818c; stroke-width: 2; fill: none; display: block; }
    .tool svg.ic { fill: #9e9e9e; stroke: none; }
    .grid { display: grid; grid-template-columns: repeat(4, 642px); gap: 32px; padding: 48px; }
    .feedback { position: absolute; right: 0; top: 704px; width: 66px; height: 208px; border-radius: 8px 0 0 8px; background: #f43f57; color: #fff; display: flex; flex-direction: column; align-items: center; justify-content: flex-end; gap: 26px; padding: 0 0 28px 10px; box-sizing: border-box; }
    .fb { writing-mode: vertical-rl; transform: rotate(180deg); font: 26px/32px "Liberation Sans", Arial, sans-serif; white-space: nowrap; }
    .face { display: block; margin-left: -2px; }
  `;

  render() {
    const nav = ["add", "history", "groupAdd", "directions", "store", "stars", "bell", "wallet", "chart", "people", "help"];
    return html`
      <div class="edge"></div>
      <div class="shell">
        <nav class="side">
          <div class="burger">${icon("menu")}</div>
          ${nav.map((k) => html`<div class="item ${k === "directions" ? "on" : ""}">
            ${k === "chart" ? html`<span class="chart">${icon(k)}<span class="bub">${icon("alert", 28)}</span></span>` : icon(k)}</div>`)}
        </nav>
        <main class="main">
          <header class="head"><span class="title">Route optimization</span><span class="info">${icon("info", 40)}</span></header>
          <div class="steps">
            <span class="num">1</span><span class="step">Pickup &amp; Dropoff</span><i class="bar"></i>
            <span class="num">2</span><span class="step">Route Settings</span><i class="bar"></i>
            <span class="num">3</span><span class="step">Review Orders</span>
          </div>
          <div class="review">${icon("back")}<span class="rt">Review Orders</span><span class="cta">BOOK (9)</span></div>
          <div class="total"><span>Total fee</span><span class="sum">₫ 742,000</span>
            <div class="tool"><svg width="40" height="40" viewBox="0 0 40 40">
              <circle cx="20" cy="10.500" r="5"></circle><path d="M20 28C17 21 10 17 10 10.500A10 10 0 0 1 30 10.500C30 17 23 21 20 28Z"></path>
              <path d="M14 24H7.500L1.500 39H38.500L32.500 24H26M4.500 31.500H35.500M14.500 24L13 39M25.500 24L27 39"></path></svg></div>
            <div class="tool"><svg width="40" height="40" viewBox="0 0 40 40">
              <path d="M10.500 27H1V1H39V27H29.500M1 6.500H39M1 11H39"></path><circle cx="20" cy="29.500" r="9.700"></circle><path d="M20 23.500V35M15 30L20 35L25 30"></path></svg></div>
            <div class="tool"><svg width="40" height="40" viewBox="0 0 40 40">
              <path d="M18 34.500H1V1H35V18M35 31V34.500H30M13 1V11.500H22.500V1"></path><circle cx="25" cy="25" r="9.500"></circle><path d="M20.500 21V29M25 21V29M29.500 21V29" stroke-width="1.800"></path><path d="M30.500 33.500L33 31L39 36.500L36 39.300Z"></path></svg></div>
            <div class="tool">${icon("cloud")}</div>
          </div>
          <div class="grid">${ORDERS.map((o) => html`<order-card .order=${o}></order-card>`)}</div>
        </main>
      </div>
      <div class="feedback"><span class="fb">Phản hồi</span>
        <svg class="face" width="39" height="30" viewBox="0 0 39 30"><path fill="#fff" d="M0 1H34Q38.500 1 38.500 5V25Q38.500 29 34.500 29H9Q5 29 5 25V8Z"></path><circle cx="14" cy="11.500" r="2" fill="#f43f57"></circle><circle cx="28" cy="11.500" r="2" fill="#f43f57"></circle><path fill="#f43f57" d="M15 18H28Q26.500 23 21.500 23T15 18Z"></path></svg>
      </div>
    `;
  }
}
